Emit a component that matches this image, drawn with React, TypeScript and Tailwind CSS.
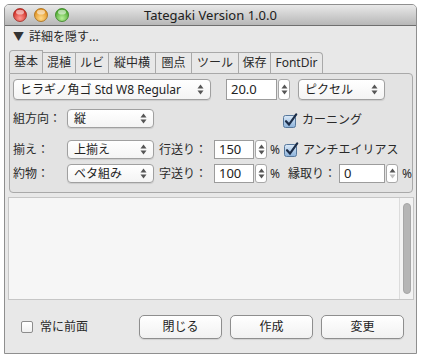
import React from "react";

const font = "font-['Noto_Sans','Noto_Sans_CJK_JP',sans-serif]";

const Light = ({ id, c1, c2, edge }: { id: string; c1: string; c2: string; edge: string }) => (
  <svg width="14" height="14" viewBox="0 0 14 14">
    <defs>
      <radialGradient id={id} cx="50%" cy="75%" r="65%">
        <stop offset="0" stopColor={c1} />
        <stop offset="1" stopColor={c2} />
      </radialGradient>
    </defs>
    <circle cx="7" cy="7" r="6.5" fill={`url(#${id})`} stroke={edge} strokeWidth="0.8" />
    <ellipse cx="7" cy="4.2" rx="4" ry="2.4" fill="#fff" opacity="0.55" />
  </svg>
);

const Arrows = ({ dim = false }: { dim?: boolean }) => (
  <svg width="7" height="11" viewBox="0 0 7 11">
    <path d="M3.5 0.5 L6.5 4.5 L0.5 4.5 Z" fill="#555" />
    <path d="M3.5 10.5 L6.5 6.5 L0.5 6.5 Z" fill={dim ? "#c0c0c0" : "#555"} />
  </svg>
);

const Popup = ({ label, size }: { label: string; size: string }) => (
  <div
    className={`flex items-center justify-between whitespace-nowrap rounded-[4px] border border-[#a0a0a0] bg-gradient-to-b from-white to-[#f4f4f4] pl-[6px] pr-[6px] text-[12px] text-[#222] shadow-[0_1px_1px_rgba(0,0,0,0.1)] ${size}`}
  >
    <span className="leading-none">{label}</span>
    <Arrows />
  </div>
);

const NumField = ({ value, size, dim = false }: { value: string; size: string; dim?: boolean }) => (
  <div className="flex items-center gap-[1px]">
    <div className={`flex items-center border border-[#9c9c9c] bg-white pl-[4px] text-[13px] text-[#222] ${size}`}>
      {value}
    </div>
    <div className="flex h-[19px] w-[12px] items-center justify-center rounded-[3px] border border-[#a8a8a8] bg-white">
      <Arrows dim={dim} />
    </div>
  </div>
);

const Checked = ({ label }: { label: string }) => (
  <div className="flex items-center gap-[4px] whitespace-nowrap text-[12px] text-[#2a2a2a]">
    <svg width="15" height="15" viewBox="0 0 15 15">
      <defs>
        <linearGradient id="cbg" x1="0" y1="0" x2="0" y2="1">
          <stop offset="0" stopColor="#dceaf8" />
          <stop offset="1" stopColor="#8cb2da" />
        </linearGradient>
      </defs>
      <rect x="0.5" y="2.5" width="12" height="12" rx="2" fill="url(#cbg)" stroke="#56779b" />
      <path d="M3 8.2 L6 11.6 L13.2 1.4" stroke="#1c2d48" strokeWidth="2.2" fill="none" strokeLinecap="round" />
    </svg>
    <span>{label}</span>
  </div>
);

const tabs = [
  { t: "基本", w: "w-[34px] border-l h-[23px] bg-[#e3e3e3] rounded-tl-[4px]" },
  { t: "混植", w: "w-[33px] h-[21px]" },
  { t: "ルビ", w: "w-[33px] h-[21px]" },
  { t: "縦中横", w: "w-[47px] h-[21px]" },
  { t: "圏点", w: "w-[36px] h-[21px]" },
  { t: "ツール", w: "w-[47px] h-[21px]" },
  { t: "保存", w: "w-[32px] h-[21px]" },
  { t: "FontDir", w: "w-[52px] h-[21px] rounded-tr-[4px]" },
];

export default function App() {
  return (
    <div className={`h-[358px] w-[421px] bg-white pl-[4px] pt-[4px] ${font}`}>
      <div className="flex h-[350px] w-[413px] flex-col rounded-t-[5px] border border-[#8f8f8f] bg-[#e8e8e8]">
        {/* title bar */}
        <div className="relative flex h-[21px] items-center gap-[7px] rounded-t-[4px] border-b border-[#6f6f6f] bg-gradient-to-b from-[#e9e9e9] to-[#b7b7b7] pl-[8px]">
          <Light id="lr" c1="#ff9b92" c2="#cf2a22" edge="#9a2620" />
          <Light id="ly" c1="#ffd98a" c2="#e0901c" edge="#a66a14" />
          <Light id="lg" c1="#b9f09a" c2="#4aa72c" edge="#33801f" />
          <span className="absolute left-0 right-0 text-center text-[13px] leading-none text-[#202020]">
            Tategaki Version 1.0.0
          </span>
        </div>

        {/* disclosure */}
        <div className="flex h-[22px] items-center gap-[5px] pl-[8px] text-[12px] text-[#2a2a2a]">
          <span className="text-[11px] text-[#333]">▼</span>
          <span>詳細を隠す...</span>
        </div>

        {/* tabs */}
        <div className="ml-[4px] flex h-[25px] items-end">
          {tabs.map((x) => (
            <div
              key={x.t}
              className={`flex items-center justify-center border-r border-t border-[#a9a9a9] text-[12px] text-[#2a2a2a] ${x.w}`}
            >
              {x.t}
            </div>
          ))}
        </div>

        {/* panel */}
        <div className="ml-[4px] mr-[3px] flex h-[120px] flex-col rounded-b-[4px] rounded-tr-[4px] border border-[#a9a9a9] bg-[#e3e3e3] pl-[3px] pt-[5px] text-[12px] text-[#2a2a2a]">
          <div className="flex h-[21px] items-center">
            <Popup label="ヒラギノ角ゴ Std W8 Regular" size="h-[21px] w-[198px]" />
            <div className="ml-[15px] flex items-center gap-[1px]">
              <div className="flex h-[21px] w-[51px] items-center border border-[#9c9c9c] bg-white pl-[4px] text-[13px] text-[#222]">
                20.0
              </div>
              <div className="flex h-[21px] w-[12px] items-center justify-center rounded-[3px] border border-[#a8a8a8] bg-white">
                <Arrows />
              </div>
            </div>
            <div className="ml-[8px]">
              <Popup label="ピクセル" size="h-[21px] w-[87px]" />
            </div>
          </div>

          <div className="mt-[9px] flex h-[19px] items-center">
            <span className="w-[54px]">組方向：</span>
            <Popup label="縦" size="h-[19px] w-[87px]" />
            <div className="ml-[129px] mt-[3px]">
              <Checked label="カーニング" />
            </div>
          </div>

          <div className="mt-[12px] flex h-[19px] items-center">
            <span className="w-[54px]">揃え：</span>
            <Popup label="上揃え" size="h-[19px] w-[87px]" />
            <span className="ml-[5px] w-[55px] whitespace-nowrap">行送り：</span>
            <NumField value="150" size="h-[19px] w-[40px]" />
            <span className="ml-[3px] w-[14px]">%</span>
            <Checked label="アンチエイリアス" />
          </div>

          <div className="mt-[5px] flex h-[19px] items-center">
            <span className="w-[54px]">約物：</span>
            <Popup label="ベタ組み" size="h-[19px] w-[87px]" />
            <span className="ml-[5px] w-[55px] whitespace-nowrap">字送り：</span>
            <NumField value="100" size="h-[19px] w-[40px]" />
            <span className="ml-[3px] w-[18px]">%</span>
            <span className="w-[51px] whitespace-nowrap">縁取り：</span>
            <NumField value="0" size="h-[19px] w-[46px]" dim />
            <span className="ml-[4px]">%</span>
          </div>
        </div>

        {/* text area */}
        <div className="ml-[3px] mr-[2px] mt-[4px] flex h-[103px] border border-[#c6c6c6] bg-[#f6f6f6]">
          <div className="flex-1" />
          <div className="flex w-[14px] justify-center border-l border-[#dcdcdc] bg-[#f3f3f3] py-[5px]">
            <div className="w-[8px] rounded-full border border-[#a6a6a6] bg-[#b5b5b5]" />
          </div>
        </div>

        {/* bottom bar */}
        <div className="flex flex-1 items-center pl-[16px]">
          <div className="flex items-center gap-[7px] text-[12px] text-[#2a2a2a]">
            <div className="h-[12px] w-[12px] rounded-[2px] border border-[#8c8c8c] bg-gradient-to-b from-white to-[#f0f0f0]" />
            <span>常に前面</span>
          </div>
          <div className="ml-[51px] flex gap-[8px]">
            {["閉じる", "作成", "変更"].map((b) => (
              <div
                key={b}
                className="flex h-[24px] w-[83px] items-center justify-center rounded-[5px] border border-[#8e8e8e] bg-gradient-to-b from-white to-[#f1f1f1] text-[12px] text-[#222] shadow-[0_1px_1px_rgba(0,0,0,0.1)]"
              >
                {b}
              </div>
            ))}
          </div>
        </div>
      </div>
    </div>
  );
}
